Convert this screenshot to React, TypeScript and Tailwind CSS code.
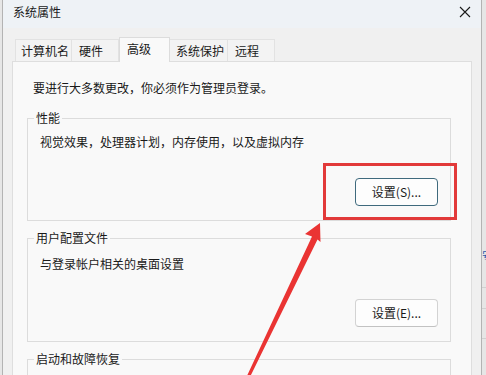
import React from "react";

const font = "font-['Microsoft_YaHei_UI','Noto_Sans_CJK_SC',sans-serif]";

function Tab({ label, w, pl, selected }: { label: string; w: number; pl: number; selected?: boolean }) {
  if (selected) {
    return (
      <div
        className="relative z-10 -mb-px h-[25px] shrink-0 border border-b-0 border-[#dcdcdc] bg-[#f9f9f9] pt-[3px] text-[12px] leading-4 text-[#1a1a1a]"
        style={{ width: w, paddingLeft: pl }}
      >
        {label}
      </div>
    );
  }
  return (
    <div
      className="h-[22px] shrink-0 border border-b-0 border-l-0 border-[#e2e2e2] bg-[#f3f3f3] pt-[3px] text-[12px] leading-4 text-[#1a1a1a] first:border-l"
      style={{ width: w, paddingLeft: pl }}
    >
      {label}
    </div>
  );
}

function Group({
  label,
  h,
  children,
  pt,
}: {
  label: string;
  h: number;
  pt: number;
  children?: React.ReactNode;
}) {
  return (
    <div
      className="relative ml-[14px] flex w-[424px] shrink-0 flex-col border border-[#dcdcdc] pl-[12px] pr-[12px]"
      style={{ height: h, paddingTop: pt }}
    >
      <span className="absolute -top-[9px] left-[6px] bg-[#f9f9f9] px-[2px] text-[12px] leading-4 text-[#1a1a1a]">
        {label}
      </span>
      {children}
    </div>
  );
}

export default function App() {
  return (
    <div className={`relative flex h-[375px] w-[486px] overflow-hidden bg-[#e6e6e6] ${font}`}>
      {/* background window fragment at right */}
      <div className="absolute right-0 top-0 flex h-full w-[4px] flex-col">
        <div className="h-[250px] shrink-0" />
        <div className="h-[10px] shrink-0 overflow-hidden text-[11px] leading-[10px] text-[#2a55a8]">安</div>
        <div className="mt-[27px] h-px shrink-0 bg-[#d0d0d0]" />
        <div className="mt-[20px] h-px shrink-0 bg-[#d0d0d0]" />
        <div className="mt-[29px] h-px shrink-0 bg-[#d0d0d0]" />
      </div>

      {/* window */}
      <div className="ml-[2px] flex h-full w-[480px] shrink-0 flex-col overflow-hidden border-x border-[#b3b3b3] bg-[#f0f0f0]">
        {/* title bar */}
        <div className="flex h-[28px] shrink-0 items-start justify-between bg-[#eef2f6] pl-[10px] pr-[10px] pt-[4px]">
          <span className="text-[12px] leading-4 text-[#1a1a1a]">系统属性</span>
          <svg width="12" height="12" viewBox="0 0 12 12" className="mt-[2px]">
            <path d="M1 1 L11 11 M11 1 L1 11" stroke="#1a1a1a" strokeWidth="1.1" fill="none" />
          </svg>
        </div>

        {/* tabs */}
        <div className="mt-[9px] flex h-[24px] shrink-0 items-end pl-[12px]">
          <Tab label="计算机名" w={57} pl={5} />
          <Tab label="硬件" w={47} pl={7} />
          <Tab label="高级" w={51} pl={7} selected />
          <Tab label="系统保护" w={58} pl={6} />
          <Tab label="远程" w={47} pl={7} />
        </div>

        {/* panel */}
        <div className="ml-[9px] flex w-[460px] flex-1 shrink-0 flex-col border border-b-0 border-[#dedede] bg-[#f9f9f9] pt-[18px]">
          <p className="shrink-0 pl-[20px] text-[12px] leading-4 text-[#1a1a1a]">要进行大多数更改，你必须作为管理员登录。</p>

          <div className="mt-[22px] flex shrink-0 flex-col gap-[17px]">
            <Group label="性能" h={103} pt={15}>
              <span className="text-[12px] leading-4 text-[#1a1a1a]">视觉效果，处理器计划，内存使用，以及虚拟内存</span>
              <button className="mt-[28px] h-[28px] w-[83px] shrink-0 self-end rounded-[4px] border border-[#3f6a7d] bg-[#fdfdfd] text-[12px] leading-4 text-[#1a1a1a]">
                设置(S)...
              </button>
            </Group>
            <Group label="用户配置文件" h={104} pt={17}>
              <span className="text-[12px] leading-4 text-[#1a1a1a]">与登录帐户相关的桌面设置</span>
              <button className="mt-[27px] h-[28px] w-[83px] shrink-0 self-end rounded-[4px] border border-[#d3d3d3] border-b-[#c2c2c2] bg-[#fdfdfd] text-[12px] leading-4 text-[#1a1a1a]">
                设置(E)...
              </button>
            </Group>
            <Group label="启动和故障恢复" h={60} pt={17} />
          </div>
        </div>
      </div>

      {/* annotation overlay */}
      <svg className="pointer-events-none absolute left-0 top-0" width="486" height="375" viewBox="0 0 486 375">
        <rect x="324.5" y="164.5" width="131" height="54" fill="none" stroke="#e23a3a" strokeWidth="3" />
        <polygon
          points="320,223 305,234 312,236.5 246,378 249.5,378 317.5,239.5 320.5,242"
          fill="#ea3433"
        />
      </svg>
    </div>
  );
}
